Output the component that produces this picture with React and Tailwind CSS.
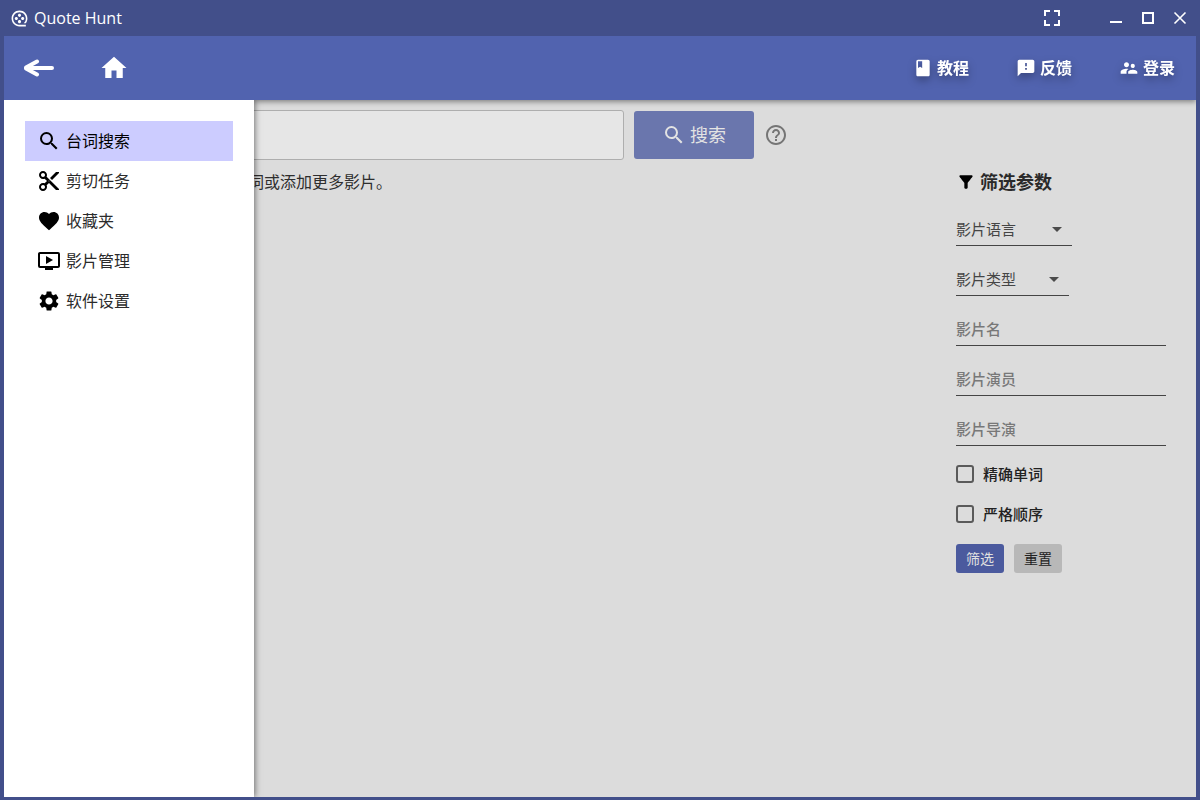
import React, { useState } from 'react';
import {
  MdSearch, MdContentCut, MdFavorite, MdOndemandVideo, MdSettings, MdHelpOutline,
  MdClass, MdFeedback, MdSupervisorAccount, MdHome, MdArrowDropDown, MdFilterAlt,
} from 'react-icons/md';
import { RiMovie2Line } from 'react-icons/ri';

const menu = [
  { label: '台词搜索', Icon: MdSearch },
  { label: '剪切任务', Icon: MdContentCut },
  { label: '收藏夹', Icon: MdFavorite },
  { label: '影片管理', Icon: MdOndemandVideo },
  { label: '软件设置', Icon: MdSettings },
];

const links = [
  { label: '教程', Icon: MdClass },
  { label: '反馈', Icon: MdFeedback },
  { label: '登录', Icon: MdSupervisorAccount },
];

function TitleBar() {
  return (
    <header className="flex h-9 items-center bg-[#424f8a] px-3 pl-[10px] text-white">
      <RiMovie2Line className="size-[19px]" aria-hidden="true" />
      <h1 className="ml-[5px] text-base leading-6">Quote Hunt</h1>
      <div className="ml-auto flex items-center gap-4">
        <button type="button" aria-label="全屏" className="mr-7 flex size-6 items-center justify-center">
          <svg viewBox="0 0 16 16" className="size-4" fill="none" stroke="currentColor" strokeWidth="2">
            <path d="M1 6V1h5M10 1h5v5M15 10v5h-5M6 15H1v-5" />
          </svg>
        </button>
        <button type="button" aria-label="最小化" className="flex size-4 items-center justify-center">
          <svg viewBox="0 0 16 16" className="size-4" stroke="currentColor" strokeWidth="2">
            <path d="M2 12h12" />
          </svg>
        </button>
        <button type="button" aria-label="最大化" className="flex size-4 items-center justify-center">
          <svg viewBox="0 0 16 16" className="size-4" fill="none" stroke="currentColor" strokeWidth="2">
            <path d="M3 3h10v10H3z" />
          </svg>
        </button>
        <button type="button" aria-label="关闭" className="flex size-4 items-center justify-center">
          <svg viewBox="0 0 16 16" className="size-4" stroke="currentColor" strokeWidth="1.6">
            <path d="M2.5 2.5l11 11M13.5 2.5l-11 11" />
          </svg>
        </button>
      </div>
    </header>
  );
}

function NavBar() {
  return (
    <nav className="relative z-20 flex h-16 items-center bg-[#5163af] pr-[21px] pl-5 text-white shadow-[0_2px_5px_rgba(0,0,0,0.4)]">
      <button type="button" aria-label="返回">
        <svg viewBox="0 0 30 18" className="h-[18px] w-[30px]" fill="none" stroke="currentColor" strokeWidth="4" strokeLinecap="round" strokeLinejoin="round">
          <path d="M28 9H2M13 2.500L2 8.500v1L13 15.500M4 9l3 1.500v-3z" />
        </svg>
      </button>
      <a href="#home" aria-label="首页" className="ml-[45px]">
        <MdHome className="size-[30px]" />
      </a>
      <div className="ml-auto flex gap-[47px]">
        {links.map(({ label, Icon }) => (
          <a key={label} href="#" className="flex items-center gap-1 text-base leading-6 font-semibold drop-shadow-[0_4px_4px_rgba(0,0,0,0.3)]">
            <Icon className="size-5" />
            {label}
          </a>
        ))}
      </div>
    </nav>
  );
}

function Drawer() {
  const [active, setActive] = useState(0);
  return (
    <aside className="absolute inset-y-0 left-0 z-30 w-[250px] bg-white px-[21px] pt-[21px] shadow-[1px_0_6px_rgba(0,0,0,0.5)]">
      <ul>
        {menu.map(({ label, Icon }, i) => (
          <li key={label}>
            <button
              type="button"
              onClick={() => setActive(i)}
              className={i === active
                ? 'flex h-10 w-full items-center gap-[5px] bg-[#ccccff] px-3 text-base text-black'
                : 'flex h-10 w-full items-center gap-[5px] px-3 text-base text-[#2b2b2b]'}
            >
              <Icon className="size-6 text-black" />
              {label}
            </button>
          </li>
        ))}
      </ul>
    </aside>
  );
}

function FilterSelect({ label, width }) {
  return (
    <div className={`relative border-b border-[#454545] ${width}`}>
      <select aria-label={label} className="block h-8 w-full appearance-none bg-transparent text-[15px] text-[#454545]">
        <option>{label}</option>
      </select>
      <MdArrowDropDown className="pointer-events-none absolute top-1 right-[3px] size-6 text-[#4b4b4b]" />
    </div>
  );
}

function FilterInput({ label }) {
  return (
    <input
      type="text"
      aria-label={label}
      placeholder={label}
      className="block h-[33px] w-full border-b border-[#454545] bg-transparent text-[15px] font-medium placeholder:text-[#787878]"
    />
  );
}

function FilterCheck({ label }) {
  return (
    <label className="flex items-center gap-[9px] text-[15px] leading-6 font-medium text-[#222]">
      <input type="checkbox" className="size-[18px] appearance-none rounded-[3px] border-2 border-[#5a5a5a] checked:bg-[#4b5a9e]" />
      {label}
    </label>
  );
}

function Filters() {
  return (
    <form className="w-[210px] shrink-0" onSubmit={(e) => e.preventDefault()}>
      <h2 className="flex items-center gap-1 text-lg leading-6 font-bold text-[#2a2a2a]">
        <MdFilterAlt className="size-5 text-black" />
        筛选参数
      </h2>
      <div className="mt-[19px] flex flex-col gap-[17px]">
        <FilterSelect label="影片语言" width="w-[116px]" />
        <FilterSelect label="影片类型" width="w-[113px]" />
        <FilterInput label="影片名" />
        <FilterInput label="影片演员" />
        <FilterInput label="影片导演" />
      </div>
      <div className="mt-4 flex flex-col gap-4">
        <FilterCheck label="精确单词" />
        <FilterCheck label="严格顺序" />
      </div>
      <div className="mt-[18px] flex gap-[10px] text-sm">
        <button type="submit" className="h-[29px] w-12 rounded-[3px] bg-[#4b5a9e] text-[#e0e0e0]">筛选</button>
        <button type="reset" className="h-[29px] w-12 rounded-[3px] bg-[#b8b8b8] text-[#222]">重置</button>
      </div>
    </form>
  );
}

export default function App() {
  return (
    <div className="flex min-h-screen flex-col bg-[#424f8a] font-['Open_Sans','Noto_Sans_CJK_SC',sans-serif]">
      <TitleBar />
      <div className="mx-1 mb-[3px] flex flex-1 flex-col overflow-hidden bg-[#dcdcdc]">
        <NavBar />
        <div className="relative flex flex-1 flex-col overflow-hidden">
          <Drawer />
          <main className="px-5 pt-[10px]">
            <form className="flex items-center" onSubmit={(e) => e.preventDefault()}>
              <input type="search" aria-label="台词" className="h-[50px] w-[600px] rounded-[3px] border border-[#aeaeae] bg-[#e6e6e6] px-3 text-lg" />
              <button type="submit" className="ml-[10px] flex h-12 w-[120px] items-center justify-center gap-1 rounded-[3px] bg-[#6a76ad] text-lg text-[#e3e3e3]">
                <MdSearch className="size-6" />
                搜索
              </button>
              <button type="button" aria-label="帮助" className="ml-[10px]">
                <MdHelpOutline className="size-6 text-[#757575]" />
              </button>
            </form>
            <div className="mt-[10px] flex justify-between pr-[10px] pl-56">
              <p className="text-base leading-6 text-[#2e2e2e]">词或添加更多影片。</p>
              <Filters />
            </div>
          </main>
        </div>
      </div>
    </div>
  );
}
